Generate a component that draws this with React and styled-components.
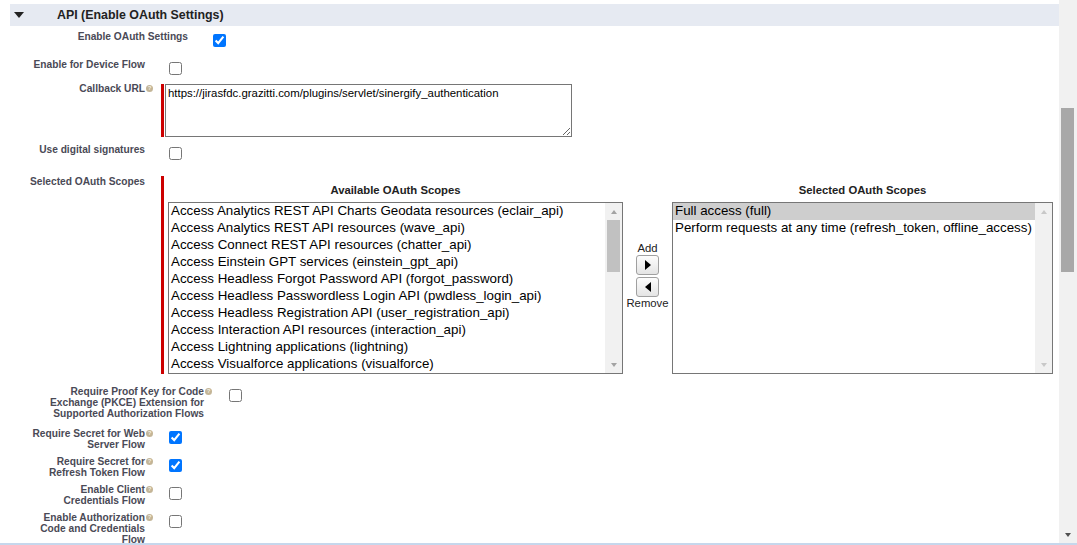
import styled, { createGlobalStyle } from 'styled-components';

const availableScopes = [
    'Access Analytics REST API Charts Geodata resources (eclair_api)',
    'Access Analytics REST API resources (wave_api)',
    'Access Connect REST API resources (chatter_api)',
    'Access Einstein GPT services (einstein_gpt_api)',
    'Access Headless Forgot Password API (forgot_password)',
    'Access Headless Passwordless Login API (pwdless_login_api)',
    'Access Headless Registration API (user_registration_api)',
    'Access Interaction API resources (interaction_api)',
    'Access Lightning applications (lightning)',
    'Access Visualforce applications (visualforce)',
];

const selectedScopes = [
    { label: 'Full access (full)', selected: true },
    { label: 'Perform requests at any time (refresh_token, offline_access)' },
];

const flowRows = [
    { label: 'Require Secret for Web Server Flow', checked: true },
    { label: 'Require Secret for Refresh Token Flow', checked: true },
    { label: 'Enable Client Credentials Flow', checked: false },
    { label: 'Enable Authorization Code and Credentials Flow', checked: false },
];

const App = () => {
    return (
        <>
            <GlobalStyle />
            <Screen>
                <Viewport>
                    <Main>
                        <SectionHeader>
                            <Twisty />
                            <SectionTitle>API (Enable OAuth Settings)</SectionTitle>
                        </SectionHeader>

                        <Row $lw={178} $h={28}>
                            <Label>Enable OAuth Settings</Label>
                            <Field><Check defaultChecked $ml={25} /></Field>
                        </Row>

                        <Row $lw={135} $h={24}>
                            <Label $wrap={118}>Enable for Device Flow</Label>
                            <Field><Check /></Field>
                        </Row>

                        <Row $lw={135} $h={61}>
                            <Label $wrap={118}>Callback URL<HelpOrb>?</HelpOrb></Label>
                            <Field>
                                <Required $mt={2}>
                                    <UrlArea defaultValue="https://jirasfdc.grazitti.com/plugins/servlet/sinergify_authentication" />
                                </Required>
                            </Field>
                        </Row>

                        <Row $lw={135} $h={32}>
                            <Label $wrap={118}>Use digital signatures</Label>
                            <Field><Check /></Field>
                        </Row>

                        <Row $lw={135} $h={210}>
                            <Label $wrap={118}>Selected OAuth Scopes</Label>
                            <Field>
                                <Required $mt={1}>
                                    <Scopes>
                                        <ColTitle $col={1}>Available OAuth Scopes</ColTitle>
                                        <ColTitle $col={3}>Selected OAuth Scopes</ColTitle>

                                        <ListBox>
                                            <Options>
                                                {availableScopes.map((s) => (
                                                    <Option key={s}>{s}</Option>
                                                ))}
                                            </Options>
                                            <Track>
                                                <ArrowBtn $color="#a3a3a3" />
                                                <Thumb $h={52} />
                                                <ArrowBtn $down $color="#a3a3a3" />
                                            </Track>
                                        </ListBox>

                                        <Mover>
                                            <span>Add</span>
                                            <MoveButton $dir="right" $mt={1} aria-label="Add" />
                                            <MoveButton $dir="left" $mt={2} aria-label="Remove" />
                                            <span>Remove</span>
                                        </Mover>

                                        <ListBox>
                                            <Options>
                                                {selectedScopes.map((s) => (
                                                    <Option key={s.label} $selected={s.selected}>{s.label}</Option>
                                                ))}
                                            </Options>
                                            <Track>
                                                <ArrowBtn $color="#c8c8c8" />
                                                <ArrowBtn $down $color="#c8c8c8" />
                                            </Track>
                                        </ListBox>
                                    </Scopes>
                                </Required>
                            </Field>
                        </Row>

                        <Row $lw={194} $h={42}>
                            <Label $wrap={165}>
                                Require Proof Key for Code Exchange (PKCE) Extension for Supported Authorization Flows
                                <HelpOrb>?</HelpOrb>
                            </Label>
                            <Field><Check $ml={25} /></Field>
                        </Row>

                        {flowRows.map((r) => (
                            <Row key={r.label} $lw={135} $h={28}>
                                <Label $wrap={118}>{r.label}<HelpOrb>?</HelpOrb></Label>
                                <Field><Check defaultChecked={r.checked} /></Field>
                            </Row>
                        ))}
                    </Main>

                    <PageScrollbar>
                        <PageThumb />
                        <ArrowBtn $down $color="#505050" />
                    </PageScrollbar>
                </Viewport>
                <BottomEdge />
            </Screen>
        </>
    );
};

export default App;

const GlobalStyle = createGlobalStyle`
    html, body {
        margin: 0;
        padding: 0;
        background: #fff;
    }

    body {
        font-family: "Liberation Sans", Arial, Helvetica, sans-serif;
    }
`;

const Screen = styled.div`
    width: 1077px;
    height: 545px;
    display: flex;
    flex-direction: column;
    overflow: hidden;
    background: #fff;
`;

const Viewport = styled.div`
    display: flex;
    flex: 1;
    min-height: 0;
`;

const Main = styled.div`
    flex: 1;
    padding: 4px 0 0 10px;
    overflow: hidden;
`;

const SectionHeader = styled.div`
    display: flex;
    align-items: center;
    height: 22px;
    margin-bottom: 4px;
    background: #e6eaf2;
`;

const Twisty = styled.span`
    width: 0;
    height: 0;
    margin-left: 4px;
    border-left: 5.5px solid transparent;
    border-right: 5.5px solid transparent;
    border-top: 6px solid #222;
`;

const SectionTitle = styled.h3`
    margin: 0 0 0 33px;
    font-size: 12.4px;
    font-weight: bold;
    color: #222;
`;

const Row = styled.div`
    display: grid;
    grid-template-columns: ${(p) => p.$lw}px 1fr;
    align-items: start;
    height: ${(p) => p.$h}px;
`;

const Label = styled.label`
    position: relative;
    justify-self: end;
    max-width: ${(p) => p.$wrap || 400}px;
    padding-top: 1px;
    text-align: right;
    font-size: 10.2px;
    line-height: 11px;
    font-weight: bold;
    color: #4a4a56;
`;

const HelpOrb = styled.span`
    position: absolute;
    right: -8px;
    top: 3px;
    width: 7px;
    height: 7px;
    border-radius: 50%;
    background: #c3b597;
    color: #f4efe4;
    font-size: 6px;
    line-height: 7px;
    font-weight: bold;
    text-align: center;
`;

const Field = styled.div`
    display: flex;
    align-items: flex-start;
`;

const Check = styled.input.attrs({ type: 'checkbox' })`
    width: 13px;
    height: 13px;
    margin: 4px 0 0 ${(p) => p.$ml ?? 24}px;
`;

const Required = styled.div`
    margin: ${(p) => p.$mt}px 0 0 16px;
    padding-left: 1px;
    border-left: 3px solid #c00;
`;

const UrlArea = styled.textarea`
    display: block;
    box-sizing: border-box;
    width: 407px;
    height: 53px;
    margin: 0;
    padding: 2px;
    border: 1px solid #767676;
    font-family: "Liberation Sans", Arial, sans-serif;
    font-size: 11.4px;
    color: #000;
`;

const Scopes = styled.div`
    display: grid;
    grid-template-columns: 455px 49px 381px;
    grid-template-rows: 26px 172px;
    padding-left: 3px;
`;

const ColTitle = styled.div`
    grid-column: ${(p) => p.$col};
    padding-top: 9px;
    text-align: center;
    font-size: 11.3px;
    line-height: 11px;
    font-weight: bold;
    color: #222;
`;

const ListBox = styled.div`
    display: flex;
    box-sizing: border-box;
    height: 172px;
    border: 1px solid #767676;
    background: #fff;
    overflow: hidden;
`;

const Options = styled.div`
    flex: 1;
    min-width: 0;
    overflow: hidden;
`;

const Option = styled.div`
    box-sizing: border-box;
    height: 17px;
    padding: 0 0 1px 2px;
    line-height: 16px;
    font-size: 13.33px;
    color: #000;
    white-space: nowrap;
    background: ${(p) => (p.$selected ? '#cecece' : 'transparent')};
`;

const Track = styled.div`
    display: flex;
    flex-direction: column;
    width: 17px;
    background: #f1f1f1;
`;

const ArrowBtn = styled.div`
    display: flex;
    align-items: center;
    justify-content: center;
    height: 17px;
    flex-shrink: 0;
    margin-top: ${(p) => (p.$down ? 'auto' : '0')};

    &::before {
        content: '';
        border-left: 3.5px solid transparent;
        border-right: 3.5px solid transparent;
        ${(p) => (p.$down ? 'border-top' : 'border-bottom')}: 4px solid ${(p) => p.$color};
    }
`;

const Thumb = styled.div`
    height: ${(p) => p.$h}px;
    margin: 0 2px;
    background: #c1c1c1;
`;

const Mover = styled.div`
    display: flex;
    flex-direction: column;
    align-items: center;
    padding-top: 40px;
    font-size: 11.3px;
    line-height: 12px;
    color: #222;
`;

const MoveButton = styled.button`
    display: flex;
    align-items: center;
    justify-content: center;
    box-sizing: border-box;
    width: 23px;
    height: 20px;
    margin-top: ${(p) => p.$mt}px;
    padding: 0;
    border: 1px solid #a0a0a0;
    border-radius: 3px;
    background: linear-gradient(#fdfdfd, #e4e4e4);

    &::before {
        content: '';
        border-top: 5px solid transparent;
        border-bottom: 5px solid transparent;
        ${(p) => (p.$dir === 'right' ? 'border-left' : 'border-right')}: 6px solid #000;
    }
`;

const PageScrollbar = styled.div`
    display: flex;
    flex-direction: column;
    box-sizing: border-box;
    width: 18px;
    padding-top: 108px;
    background: #f1f1f1;
`;

const PageThumb = styled.div`
    height: 164px;
    margin: 0 3px 0 2px;
    background: #a8a8a8;
`;

const BottomEdge = styled.div`
    height: 2px;
    background: #c6d7ec;
`;
